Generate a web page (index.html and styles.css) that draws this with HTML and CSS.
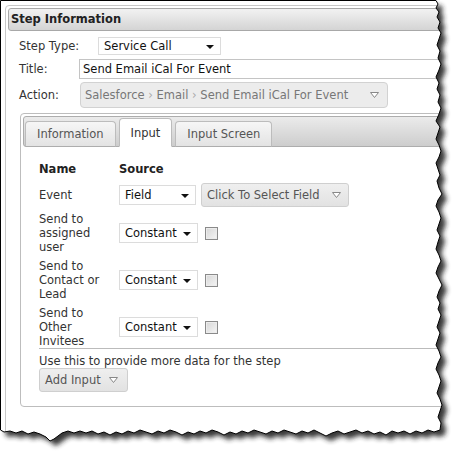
FILE: index.html
```html
<!DOCTYPE html>
<html lang="en">
<head>
    <meta charset="UTF-8">
    <title>Step Information</title>
    <link rel="stylesheet" href="styles.css">
</head>
<body>
    <div class="sheet">
        <div class="panel">
            <div class="panel-head">Step Information</div>

            <div class="fields">
                <div class="row row-type">
                    <span class="lbl lbl-type">Step Type:</span>
                    <div class="select select-type">Service Call<span class="caret"></span></div>
                </div>
                <div class="row row-title">
                    <span class="lbl">Title:</span>
                    <div class="text-input">Send Email iCal For Event</div>
                </div>
                <div class="row row-action">
                    <span class="lbl">Action:</span>
                    <div class="crumbs">
                        <span class="path">Salesforce <span class="sep">&rsaquo;</span> Email <span class="sep">&rsaquo;</span> Send Email iCal For Event</span>
                        <svg class="drop" width="9" height="6" viewBox="0 0 9 6"><path d="M0.5 0.5H8.5L4.5 5.5Z" fill="#fff" stroke="#888"/></svg>
                    </div>
                </div>
            </div>

            <div class="tabbox">
                <div class="tabstrip">
                    <span class="tab">Information</span>
                    <span class="tab active">Input</span>
                    <span class="tab">Input Screen</span>
                </div>

                <div class="inputs">
                    <div class="grid">
                        <span class="head">Name</span>
                        <span class="head">Source</span>

                        <span class="name">Event</span>
                        <div class="cell">
                            <div class="select select-field">Field<span class="caret"></span></div>
                            <div class="btn btn-pick"><span>Click To Select Field</span>
                                <svg class="drop" width="9" height="6" viewBox="0 0 9 6"><path d="M0.5 0.5H8.5L4.5 5.5Z" fill="#fff" stroke="#888"/></svg>
                            </div>
                        </div>

                        <span class="name">Send to assigned user</span>
                        <div class="cell">
                            <div class="select select-const">Constant<span class="caret"></span></div>
                            <span class="check"></span>
                        </div>

                        <span class="name">Send to Contact or Lead</span>
                        <div class="cell">
                            <div class="select select-const">Constant<span class="caret"></span></div>
                            <span class="check"></span>
                        </div>

                        <span class="name">Send to Other Invitees</span>
                        <div class="cell">
                            <div class="select select-const">Constant<span class="caret"></span></div>
                            <span class="check"></span>
                        </div>
                    </div>

                    <div class="hint">Use this to provide more data for the step</div>
                    <div class="btn btn-add"><span>Add Input</span>
                        <svg class="drop" width="9" height="6" viewBox="0 0 9 6"><path d="M0.5 0.5H8.5L4.5 5.5Z" fill="#fff" stroke="#888"/></svg>
                    </div>
                </div>
            </div>
        </div>

        <!-- torn paper edge, its shadow and the frame line -->
        <svg class="edge" width="465" height="460" viewBox="0 0 465 460">
            <defs>
                <filter id="soft" x="-10%" y="-10%" width="120%" height="120%">
                    <feGaussianBlur stdDeviation="2.4"/>
                </filter>
                <clipPath id="outside">
                    <path clip-rule="evenodd" d="M0 0H465V460H0Z M0.5 0.5H436L438 4L436 8L439 12L437 17L440 22L438 28L441 33L439 39L437 45L440 51L438 58L441 64L439 70L436 77L439 83L437 89L440 95L438 102L441 108L439 114L436 121L440 127L438 133L436 139L439 145L441 151L439 157L436 163L438 169L440 175L437 181L439 188L442 194L438 200L436 206L439 212L441 218L439 224L437 230L440 236L438 242L436 249L439 255L441 261L438 267L436 273L439 279L442 285L439 291L437 297L440 303L438 309L441 315L439 321L437 327L440 333L438 339L436 345L439 351L441 357L438 363L436 369L439 375L441 381L439 387L437 393L440 399L442 405L440 411L438 417L441 423L440 430L434 432L428 430L422 433L416 431L410 434L404 431L398 433L392 431L386 435L380 432L374 434L368 431L362 433L356 430L350 432L344 434L338 431L332 433L326 436L320 433L314 430L308 433L302 431L296 434L290 432L284 430L278 433L272 431L266 434L260 432L254 430L248 433L242 431L236 434L230 432L224 435L218 432L212 430L206 433L200 431L194 434L188 432L182 435L176 432L170 430L164 433L158 431L152 434L146 432L140 430L134 433L128 431L122 434L116 432L110 435L104 432L98 434L92 431L86 433L80 431L74 433L68 431L62 433L58 436L54 439L50 441L46 437L40 434L34 432L28 434L22 431L16 433L10 431L4 432L0.5 430Z"/>
                </clipPath>
            </defs>
            <path class="outer" fill-rule="evenodd" d="M0 0H465V460H0Z M0.5 0.5H436L438 4L436 8L439 12L437 17L440 22L438 28L441 33L439 39L437 45L440 51L438 58L441 64L439 70L436 77L439 83L437 89L440 95L438 102L441 108L439 114L436 121L440 127L438 133L436 139L439 145L441 151L439 157L436 163L438 169L440 175L437 181L439 188L442 194L438 200L436 206L439 212L441 218L439 224L437 230L440 236L438 242L436 249L439 255L441 261L438 267L436 273L439 279L442 285L439 291L437 297L440 303L438 309L441 315L439 321L437 327L440 333L438 339L436 345L439 351L441 357L438 363L436 369L439 375L441 381L439 387L437 393L440 399L442 405L440 411L438 417L441 423L440 430L434 432L428 430L422 433L416 431L410 434L404 431L398 433L392 431L386 435L380 432L374 434L368 431L362 433L356 430L350 432L344 434L338 431L332 433L326 436L320 433L314 430L308 433L302 431L296 434L290 432L284 430L278 433L272 431L266 434L260 432L254 430L248 433L242 431L236 434L230 432L224 435L218 432L212 430L206 433L200 431L194 434L188 432L182 435L176 432L170 430L164 433L158 431L152 434L146 432L140 430L134 433L128 431L122 434L116 432L110 435L104 432L98 434L92 431L86 433L80 431L74 433L68 431L62 433L58 436L54 439L50 441L46 437L40 434L34 432L28 434L22 431L16 433L10 431L4 432L0.5 430Z"/>
            <g clip-path="url(#outside)">
                <path class="shade" transform="translate(5 5)" filter="url(#soft)" d="M0.5 0.5H436L438 4L436 8L439 12L437 17L440 22L438 28L441 33L439 39L437 45L440 51L438 58L441 64L439 70L436 77L439 83L437 89L440 95L438 102L441 108L439 114L436 121L440 127L438 133L436 139L439 145L441 151L439 157L436 163L438 169L440 175L437 181L439 188L442 194L438 200L436 206L439 212L441 218L439 224L437 230L440 236L438 242L436 249L439 255L441 261L438 267L436 273L439 279L442 285L439 291L437 297L440 303L438 309L441 315L439 321L437 327L440 333L438 339L436 345L439 351L441 357L438 363L436 369L439 375L441 381L439 387L437 393L440 399L442 405L440 411L438 417L441 423L440 430L434 432L428 430L422 433L416 431L410 434L404 431L398 433L392 431L386 435L380 432L374 434L368 431L362 433L356 430L350 432L344 434L338 431L332 433L326 436L320 433L314 430L308 433L302 431L296 434L290 432L284 430L278 433L272 431L266 434L260 432L254 430L248 433L242 431L236 434L230 432L224 435L218 432L212 430L206 433L200 431L194 434L188 432L182 435L176 432L170 430L164 433L158 431L152 434L146 432L140 430L134 433L128 431L122 434L116 432L110 435L104 432L98 434L92 431L86 433L80 431L74 433L68 431L62 433L58 436L54 439L50 441L46 437L40 434L34 432L28 434L22 431L16 433L10 431L4 432L0.5 430Z"/>
            </g>
            <path class="line" d="M0.5 0.5H436L438 4L436 8L439 12L437 17L440 22L438 28L441 33L439 39L437 45L440 51L438 58L441 64L439 70L436 77L439 83L437 89L440 95L438 102L441 108L439 114L436 121L440 127L438 133L436 139L439 145L441 151L439 157L436 163L438 169L440 175L437 181L439 188L442 194L438 200L436 206L439 212L441 218L439 224L437 230L440 236L438 242L436 249L439 255L441 261L438 267L436 273L439 279L442 285L439 291L437 297L440 303L438 309L441 315L439 321L437 327L440 333L438 339L436 345L439 351L441 357L438 363L436 369L439 375L441 381L439 387L437 393L440 399L442 405L440 411L438 417L441 423L440 430L434 432L428 430L422 433L416 431L410 434L404 431L398 433L392 431L386 435L380 432L374 434L368 431L362 433L356 430L350 432L344 434L338 431L332 433L326 436L320 433L314 430L308 433L302 431L296 434L290 432L284 430L278 433L272 431L266 434L260 432L254 430L248 433L242 431L236 434L230 432L224 435L218 432L212 430L206 433L200 431L194 434L188 432L182 435L176 432L170 430L164 433L158 431L152 434L146 432L140 430L134 433L128 431L122 434L116 432L110 435L104 432L98 434L92 431L86 433L80 431L74 433L68 431L62 433L58 436L54 439L50 441L46 437L40 434L34 432L28 434L22 431L16 433L10 431L4 432L0.5 430Z"/>
        </svg>
    </div>
</body>
</html>
```

FILE: styles.css
```css
body {
    margin: 0;
    background: #fff;
    font-family: "DejaVu Sans", Verdana, sans-serif;
    font-size: 11.5px;
    color: #333;
}

.sheet {
    position: relative;
    width: 465px;
    height: 460px;
    overflow: hidden;
}

/* outer box */
.panel {
    margin: 5px 0 0 5px;
    width: 470px;
    height: 470px;
    padding: 2px;
    border: 1px solid #c8c8c8;
    border-radius: 4px;
}

.panel-head {
    height: 21px;
    line-height: 21px;
    padding-left: 2px;
    border: 1px solid #a8a8a8;
    border-radius: 3px;
    background: linear-gradient(#f2f2f2, #d4d4d4);
    font-weight: bold;
    font-size: 11.5px;
    color: #222;
}

.fields {
    padding: 6px 0 0 11px;
}

.row {
    display: flex;
    align-items: center;
}

.row-type { height: 18px; margin-bottom: 4px; }
.row-title { height: 20px; margin-bottom: 3px; }
.row-action { height: 26px; }

.lbl {
    width: 60px;
    flex: none;
}

.lbl-type {
    width: 79px;
}

/* fake select boxes */
.select {
    position: relative;
    box-sizing: border-box;
    height: 100%;
    padding-left: 5px;
    border: 1px solid #dcdcdc;
    background: #fff;
    color: #111;
    display: flex;
    align-items: center;
}

.caret {
    position: absolute;
    right: 6px;
    top: 50%;
    margin-top: -1px;
    border-left: 4px solid transparent;
    border-right: 4px solid transparent;
    border-top: 4px solid #111;
}

.select-type {
    width: 123px;
}

.text-input {
    box-sizing: border-box;
    height: 20px;
    width: 400px;
    padding-left: 3px;
    line-height: 18px;
    border: 1px solid #c4c4c4;
    color: #111;
}

.crumbs {
    box-sizing: border-box;
    height: 26px;
    width: 308px;
    margin-left: 1px;
    padding: 0 8px 0 4px;
    display: flex;
    align-items: center;
    border: 1px solid #d2d2d2;
    border-radius: 4px;
    background: #ececec;
    color: #777;
}

.crumbs .sep {
    color: #aaa;
}

.drop {
    flex: none;
    margin-left: auto;
}

/* tabbed box */
.tabbox {
    margin: 5px 0 0 12px;
    padding: 2px;
    height: 288px;
    border: 1px solid #bdbdbd;
    border-radius: 4px;
}

.tabstrip {
    height: 29px;
    padding: 0 0 0 1px;
    display: flex;
    align-items: flex-end;
    gap: 3px;
    border: 1px solid #adadad;
    border-radius: 3px;
    background: linear-gradient(#ebebeb, #cdcdcd);
}

.tab {
    box-sizing: border-box;
    height: 26px;
    line-height: 24px;
    padding: 0 11px;
    margin-bottom: -1px;
    border: 1px solid #bcbcbc;
    border-bottom-color: #adadad;
    border-radius: 4px 4px 0 0;
    background: linear-gradient(#f6f6f6, #e3e3e3);
    color: #555;
}

.tab.active {
    height: 29px;
    line-height: 28px;
    background: #fff;
    border-bottom-color: #fff;
    color: #333;
}

.inputs {
    padding: 14px 0 0 16px;
}

.grid {
    display: grid;
    grid-template-columns: 80px auto;
    row-gap: 5px;
    align-items: center;
    line-height: 14px;
}

.head {
    font-weight: bold;
    color: #222;
    height: 17px;
    line-height: 17px;
}

.name {
    padding-right: 10px;
}

.cell {
    display: flex;
    align-items: center;
}

.select-field {
    width: 77px;
    height: 20px;
}

.select-const {
    width: 79px;
    height: 20px;
}

.btn {
    box-sizing: border-box;
    height: 24px;
    padding: 0 7px 0 5px;
    display: flex;
    align-items: center;
    border: 1px solid #cfcfcf;
    border-radius: 3px;
    background: linear-gradient(#efefef, #e2e2e2);
    color: #555;
}

.btn-pick {
    width: 148px;
    margin-left: 5px;
}

.btn-add {
    width: 89px;
    padding-right: 9px;
}

.check {
    box-sizing: border-box;
    width: 13px;
    height: 13px;
    margin-left: 7px;
    border: 1px solid #8a8a8a;
    background: linear-gradient(135deg, #d6d6d6, #f5f5f5);
    box-shadow: inset 0 0 0 1px #ececec;
}

.hint {
    padding-top: 5px;
    height: 14px;
    line-height: 14px;
    border-top: 1px solid #bbb;
    color: #333;
}

/* edge drawing sits over the page */
.edge {
    position: absolute;
    left: 0;
    top: 0;
    pointer-events: none;
}

.edge .outer {
    fill: #fff;
}

.edge .shade {
    fill: #222;
    opacity: 0.9;
}

.edge .line {
    fill: none;
    stroke: #000;
    stroke-width: 1;
}
```
